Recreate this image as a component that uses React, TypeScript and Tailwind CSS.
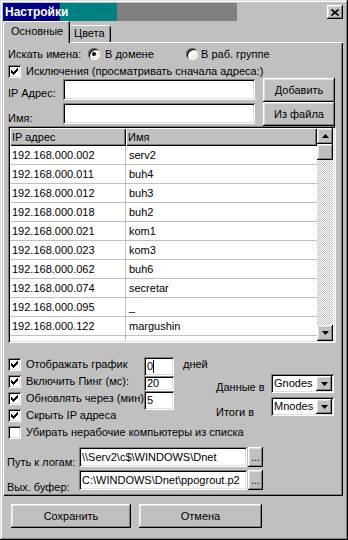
import React from "react";

const raised =
  "shadow-[inset_-1px_-1px_#000,inset_1px_1px_#fff,inset_-2px_-2px_#808080,inset_2px_2px_#dfdfdf]";
const sunken =
  "shadow-[inset_1px_1px_#808080,inset_-1px_-1px_#fff,inset_2px_2px_#000,inset_-2px_-2px_#dfdfdf]";
const header = "shadow-[inset_1px_1px_#fff,inset_-1px_-1px_#000,inset_-2px_-2px_#808080]";

const rows = [
  ["192.168.000.002", "serv2"],
  ["192.168.000.011", "buh4"],
  ["192.168.000.012", "buh3"],
  ["192.168.000.018", "buh2"],
  ["192.168.000.021", "kom1"],
  ["192.168.000.023", "kom3"],
  ["192.168.000.062", "buh6"],
  ["192.168.000.074", "secretar"],
  ["192.168.000.095", "_"],
  ["192.168.000.122", "margushin"],
  ["", ""],
];

const Arrow = ({ up }: { up?: boolean }) => (
  <svg width="7" height="4" viewBox="0 0 7 4">
    <path d={up ? "M3.5 0L7 4H0z" : "M0 0h7L3.5 4z"} fill="#000" />
  </svg>
);

const Checkbox = ({ checked }: { checked?: boolean }) => (
  <div className={`w-[13px] h-[13px] shrink-0 bg-white ${sunken} flex items-center justify-center`}>
    {checked && (
      <svg width="7" height="7" viewBox="0 0 7 7" shapeRendering="crispEdges">
        <path d="M6 0h1v3h-1v1h-1v1h-1v1h-1v1h-1v-1h-1v-1h-1v-3h1v1h1v1h1v-1h1v-1h1z" fill="#000" />
      </svg>
    )}
  </div>
);

const Radio = ({ checked }: { checked?: boolean }) => (
  <div className={`w-[12px] h-[12px] shrink-0 rounded-full bg-white ${sunken} flex items-center justify-center`}>
    {checked && <div className="w-[4px] h-[4px] rounded-full bg-black" />}
  </div>
);

const Button = ({ className, children }: { className: string; children: React.ReactNode }) => (
  <div className={`bg-[#c0c0c0] ${raised} flex items-center justify-center ${className}`}>{children}</div>
);

const Select = ({ value }: { value: string }) => (
  <div className={`w-[63px] h-[19px] bg-white ${sunken} flex items-center p-[2px]`}>
    <span className="flex-1 pl-[1px]">{value}</span>
    <div className={`w-[16px] h-full bg-[#c0c0c0] ${raised} flex items-center justify-center`}>
      <Arrow />
    </div>
  </div>
);

const Field = ({ className, children }: { className: string; children?: React.ReactNode }) => (
  <div className={`bg-white ${sunken} flex items-center pl-[3px] overflow-hidden whitespace-nowrap ${className}`}>
    {children}
  </div>
);

export default function App() {
  return (
    <div
      className={`w-[348px] h-[540px] bg-[#c0c0c0] p-[3px] flex flex-col font-['Liberation_Sans',Arial,sans-serif] text-[11px] leading-none text-black shadow-[inset_-1px_-1px_#000,inset_1px_1px_#dfdfdf,inset_-2px_-2px_#808080,inset_2px_2px_#fff]`}
    >
      {/* title bar */}
      <div className="flex h-[18px] shrink-0 items-center">
        <div className="h-full w-[234px] bg-[linear-gradient(to_right,#000080_0px,#000080_57px,#008080_57px,#008080_114px,#808080_114px,#808080_234px)] flex items-center pl-[2px]">
          <span className="text-white font-bold text-[12px]">Настройки</span>
        </div>
        <div className={`ml-auto mr-[2px] w-[16px] h-[14px] bg-[#c0c0c0] ${raised} flex items-center justify-center`}>
          <svg width="8" height="7" viewBox="0 0 8 7">
            <path d="M0.5 0.5L7.5 6.5M7.5 0.5L0.5 6.5" stroke="#000" strokeWidth="1.6" />
          </svg>
        </div>
      </div>

      {/* tabs */}
      <div className="flex items-end h-[21px] shrink-0 relative z-10">
        <div className="w-[67px] h-[22px] -mb-px bg-[#c0c0c0] rounded-t-[2px] shadow-[inset_1px_1px_#fff,inset_-1px_0_#000,inset_-2px_0_#808080] flex items-center pl-[8px] pb-[1px]">
          Основные
        </div>
        <div className="w-[41px] h-[17px] bg-[#c0c0c0] rounded-t-[2px] shadow-[inset_0_1px_#fff,inset_-1px_0_#000,inset_-2px_0_#808080] flex items-center pl-[4px]">
          Цвета
        </div>
      </div>

      {/* panel */}
      <div className="w-[340px] h-[454px] shrink-0 shadow-[inset_1px_1px_#fff,inset_-1px_-1px_#000,inset_-2px_-2px_#808080] pl-[5px] pt-[4px] flex flex-col">
        <div className="flex items-center h-[16px]">
          <span className="w-[80px]">Искать имена:</span>
          <Radio checked />
          <span className="ml-[5px] w-[81px]">В домене</span>
          <Radio />
          <span className="ml-[3px]">В раб. группе</span>
        </div>

        <div className="flex items-center h-[13px] mt-[3px]">
          <Checkbox checked />
          <span className="ml-[5px]">Исключения (просматривать сначала адреса:)</span>
        </div>

        <div className="flex">
          <div className="flex flex-col w-[247px]">
            <div className="flex h-[24px] items-start">
              <span className="w-[55px] pt-[10px]">IP Адрес:</span>
              <Field className="mt-[1px] h-[21px] w-[192px]" />
            </div>
            <div className="flex h-[24px] items-start">
              <span className="w-[55px] pt-[11px]">Имя:</span>
              <Field className="mt-[1px] h-[21px] w-[192px]" />
            </div>
          </div>
          <div className="ml-[8px] flex flex-col">
            <Button className="w-[72px] h-[24px]">Добавить</Button>
            <Button className="w-[72px] h-[24px]">Из файла</Button>
          </div>
        </div>

        {/* list */}
        <div className={`w-[328px] h-[217px] bg-white p-[2px] ${sunken} flex`}>
          <div className="w-[307px] flex flex-col overflow-hidden">
            <div className="flex h-[18px] shrink-0 bg-[#c0c0c0]">
              <div className={`w-[116px] ${header} flex items-center pl-[2px]`}>IP адрес</div>
              <div className={`w-[191px] ${header} flex items-center pl-[2px]`}>Имя</div>
            </div>
            {rows.map(([ip, name], i) => (
              <div key={i} className="flex h-[19px] shrink-0 border-b border-[#c0c0c0]">
                <div className="w-[116px] border-r border-[#c0c0c0] flex items-center pl-[2px]">{ip}</div>
                <div className="flex-1 flex items-center pl-[3px]">{name}</div>
              </div>
            ))}
          </div>
          <div className="w-[16px] flex flex-col">
            <div className={`h-[16px] bg-[#c0c0c0] ${raised} flex items-center justify-center`}>
              <Arrow up />
            </div>
            <div className={`h-[16px] bg-[#c0c0c0] ${raised}`} />
            <div className="flex-1 bg-[repeating-conic-gradient(#c0c0c0_0_25%,#fff_0_50%)] bg-[length:2px_2px]" />
            <div className={`h-[16px] bg-[#c0c0c0] ${raised} flex items-center justify-center`}>
              <Arrow />
            </div>
          </div>
        </div>

        {/* options */}
        <div className="mt-[13px] flex">
          <div className="w-[136px] flex flex-col">
            {[
              "Отображать график",
              "Включить Пинг (мс):",
              "Обновлять через (мин)",
              "Скрыть IP адреса",
            ].map((t) => (
              <div key={t} className="flex items-center h-[17px]">
                <Checkbox checked />
                <span className="ml-[5px] whitespace-nowrap">{t}</span>
              </div>
            ))}
          </div>
          <div className="flex flex-col w-[30px] mt-[1px]">
            <Field className="h-[19px] w-[30px]">
              0<span className="w-px h-[13px] bg-black" />
            </Field>
            <Field className="h-[15px] w-[30px]">20</Field>
            <Field className="h-[19px] w-[30px]">5</Field>
          </div>
          <div className="w-[42px] pl-[9px] pt-[3px]">дней</div>
          <div className="flex flex-col mt-[18px]">
            <div className="flex h-[19px] items-end">
              <span className="w-[55px]">Данные в</span>
              <Select value="Gnodes" />
            </div>
            <div className="flex h-[19px] items-end mt-[4px]">
              <span className="w-[55px] -mb-[2px]">Итоги в</span>
              <Select value="Mnodes" />
            </div>
          </div>
        </div>
        <div className="flex items-center h-[17px]">
          <Checkbox />
          <span className="ml-[5px]">Убирать нерабочие компьютеры из списка</span>
        </div>

        {/* paths */}
        <div className="mt-[6px] flex h-[20px] items-start -ml-px">
          <span className="w-[72px] pt-[10px] whitespace-nowrap">Путь к логам:</span>
          <Field className="h-[20px] w-[168px]">{"\\\\Serv2\\c$\\WINDOWS\\Dnet"}</Field>
          <Button className="ml-px w-[15px] h-[20px] items-end pb-[4px]">...</Button>
        </div>
        <div className="mt-[3px] flex h-[20px] items-start -ml-px">
          <span className="w-[72px] pt-[12px] whitespace-nowrap">Вых. буфер:</span>
          <Field className="h-[20px] w-[168px]">{"C:\\WINDOWS\\Dnet\\ppogrout.p2"}</Field>
          <Button className="ml-px w-[15px] h-[20px] items-end pb-[4px]">...</Button>
        </div>
      </div>

      {/* bottom buttons */}
      <div className="flex mt-[8px] pl-[8px] gap-[8px]">
        <Button className="w-[120px] h-[24px]">Сохранить</Button>
        <Button className="w-[123px] h-[24px]">Отмена</Button>
      </div>
    </div>
  );
}
